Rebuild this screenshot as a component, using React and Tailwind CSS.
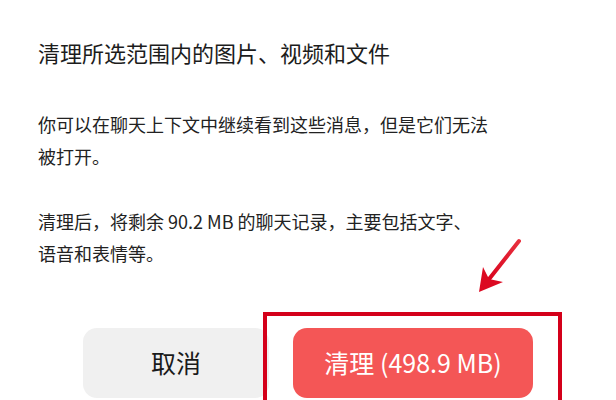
import React from 'react';

const font = { fontFamily: '"Noto Sans CJK SC", "Noto Sans", sans-serif' };

const Arrow = () => (
  <svg className="absolute left-[470px] top-[236px]" width="60" height="64" viewBox="0 0 60 64">
    <defs>
      <linearGradient id="arr" x1="1" y1="0" x2="0" y2="1">
        <stop offset="0" stopColor="#e8303e" />
        <stop offset="1" stopColor="#d8001c" />
      </linearGradient>
    </defs>
    <line x1="49" y1="5" x2="16" y2="47" stroke="url(#arr)" strokeWidth="4" strokeLinecap="round" />
    <polygon points="9,56 13,31 19,43 33,46" fill="#dc0a22" />
  </svg>
);

const App = () => {
  return (
    <div className="relative w-[616px] h-[400px] overflow-hidden bg-white text-[#1c1c1c]" style={font}>
      <div className="px-[38px] pt-[36px]">
        <h1 className="text-[22px] leading-[32px] font-normal">清理所选范围内的图片、视频和文件</h1>
        <p className="mt-[40px] text-[18px] leading-[32px] text-[#222]">
          你可以在聊天上下文中继续看到这些消息，但是它们无法
          <br />
          被打开。
        </p>
        <p className="mt-[33px] text-[18px] leading-[32px] text-[#222]">
          清理后，将剩余 90.2 MB 的聊天记录，主要包括文字、
          <br />
          语音和表情等。
        </p>
      </div>

      <div className="mt-[59px] ml-[83px] flex gap-[24px]">
        <button className="w-[186px] h-[70px] rounded-[14px] bg-[#f0f0f0] text-[25px] font-normal text-[#1a1a1a]">
          取消
        </button>
        <button className="w-[240px] h-[70px] rounded-[14px] bg-[#f45656] text-[25px] font-normal text-white">
          清理 (498.9 MB)
        </button>
      </div>

      {/* annotation overlay */}
      <div className="absolute left-[263px] top-[312px] w-[299px] h-[130px] border-4 border-[#d4001a]" />
      <Arrow />
    </div>
  );
};

export default App;
